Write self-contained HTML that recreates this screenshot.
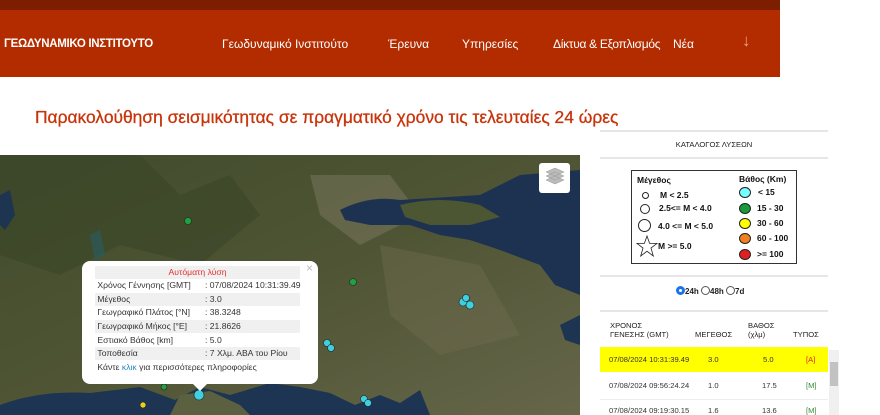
<!DOCTYPE html>
<html><head><meta charset="utf-8"><style>
*{margin:0;padding:0;box-sizing:border-box}
body{width:880px;height:415px;overflow:hidden;background:#fff;font-family:"Liberation Sans",sans-serif;position:relative}
.top{position:absolute;left:0;top:0;width:780px;height:10px;background:#7e1e00}
.nav{position:absolute;left:0;top:10px;width:780px;height:67px;background:#b22c00;color:#fff}
.nav span{position:absolute;top:27px;font-size:12px;white-space:nowrap;line-height:14px}
.logo{font-weight:bold;font-size:11.5px!important;left:4px;letter-spacing:-0.3px}
h1{position:absolute;left:35px;top:107px;font-size:17.4px;font-weight:normal;color:#c8340a;white-space:nowrap;-webkit-text-stroke:0.3px #c8340a}
.map{position:absolute;left:0;top:155px;width:580px;height:260px;overflow:hidden}
.pop{position:absolute;left:82px;top:261px;width:236px;height:123px;background:#fff;border-radius:8px;font-size:8.6px;color:#333}
.pop .r{position:absolute;left:13px;width:205px;height:13px;line-height:13px;white-space:nowrap}
.pop .r b{font-weight:normal;position:absolute;left:110px}
.g{background:#f0f0f0}
.hr{position:absolute;left:600px;width:228px;height:2px;background:#e6e6e6}
.leg{position:absolute;left:631px;top:170px;width:166px;height:94px;border:1px solid #333;font-size:8.5px;font-weight:bold;color:#111}
.leg div{position:absolute;white-space:nowrap}
.c{border:1px solid #222;border-radius:50%;position:absolute}
.t{position:absolute;font-size:7.6px;color:#333;white-space:nowrap}
</style></head><body>
<div class="top"></div>
<div class="nav">
<span class="logo">ΓΕΩΔΥΝΑΜΙΚΟ ΙΝΣΤΙΤΟΥΤΟ</span>
<span style="left:222px">Γεωδυναμικό Ινστιτούτο</span>
<span style="left:388px">Έρευνα</span>
<span style="left:462px">Υπηρεσίες</span>
<span style="left:553px;letter-spacing:-0.3px">Δίκτυα &amp; Εξοπλισμός</span>
<span style="left:673px">Νέα</span>
<span style="left:742px;font-size:17px;top:24px;color:#f0a080">↓</span>
</div>
<h1>Παρακολούθηση σεισμικότητας σε πραγματικό χρόνο τις τελευταίες 24 ώρες</h1>
<div class="map">
<svg width="580" height="260">
<defs><linearGradient id="l" x1="0" y1="0" x2="1" y2="1"><stop offset="0" stop-color="#404b2c"/><stop offset="0.5" stop-color="#4f5534"/><stop offset="1" stop-color="#66664a"/></linearGradient></defs>
<rect width="580" height="260" fill="url(#l)"/>
<path d="M0 0L140 0 180 40 230 20 260 60 200 110 120 90 60 120 0 100Z" fill="#3a4628" opacity=".6"/>
<path d="M310 20L390 20 420 60 360 90 320 60Z" fill="#7b7860" opacity=".5"/>
<path d="M380 90L480 110 520 180 440 200 390 160Z" fill="#6f6a50" opacity=".45"/>
<path d="M340 55Q370 40 400 45L480 40 520 20 580 15 580 140 555 130 540 110 500 95 470 85 440 80 410 70 370 70 345 65Z" fill="#1d3250"/>
<path d="M400 50Q440 40 480 50L500 62 470 70 430 70 405 62Z" fill="#4c5632"/>
<path d="M0 250Q40 235 90 238L140 232 175 245 200 232 230 240 270 228 300 232 330 238 355 250 380 240 400 248 420 235 430 260 0 260Z" fill="#1d3452"/>
<path d="M170 260L180 240 210 236 240 250 250 260Z" fill="#5a6040"/>
<path d="M0 40L10 35 15 60 5 75 0 70Z" fill="#1e3552"/>
<path d="M90 80L100 75 105 100 95 105Z" fill="#2b5a60" opacity=".7"/>
<path d="M560 170L580 160 580 190 565 185Z" fill="#1e3552"/>
<g stroke="#222" stroke-width=".6">
<circle cx="188" cy="66" r="3.5" fill="#22a040"/>
<circle cx="353" cy="127" r="3.5" fill="#22a040"/>
<circle cx="164" cy="232" r="3" fill="#22a040"/>
<circle cx="143" cy="250" r="3" fill="#e6d020"/>
<g fill="#3fd0e0"><circle cx="463" cy="147" r="4"/><circle cx="470" cy="150" r="4"/><circle cx="466" cy="143" r="3.5"/><circle cx="327" cy="188" r="3.5"/><circle cx="331" cy="193" r="3.5"/><circle cx="364" cy="244" r="3.5"/><circle cx="368" cy="248" r="3.5"/><circle cx="199" cy="240" r="5"/></g>
</g>
<rect x="539" y="8" width="31" height="30" rx="3" fill="#fff"/>
<path d="M546 25l9 4 9-4-9-4z M546 21l9 4 9-4-9-4z M546 17l9 4 9-4-9-4z" fill="#bbb" stroke="#999" stroke-width=".5"/>
</svg>
</div>
<div class="pop">
<div style="position:absolute;right:5px;top:0;color:#bbb;font-size:12px">×</div>
<div class="r g" style="top:5px;text-align:center;color:#e03030">Αυτόματη λύση</div>
<div class="r" style="top:18px">&nbsp;Χρόνος Γέννησης [GMT]<b>: 07/08/2024 10:31:39.49</b></div>
<div class="r g" style="top:32px">&nbsp;Μέγεθος<b>: 3.0</b></div>
<div class="r" style="top:45px">&nbsp;Γεωγραφικό Πλάτος [°N]<b>: 38.3248</b></div>
<div class="r g" style="top:59px">&nbsp;Γεωγραφικό Μήκος [°E]<b>: 21.8626</b></div>
<div class="r" style="top:73px">&nbsp;Εστιακό Βάθος [km]<b>: 5.0</b></div>
<div class="r g" style="top:86px">&nbsp;Τοποθεσία<b>: 7 Χλμ. ΑΒΑ του Ρίου</b></div>
<div class="r" style="top:100px">&nbsp;Κάντε <span style="color:#2a8ac0">κλικ</span> για περισσότερες πληροφορίες</div>
<div style="position:absolute;left:111px;bottom:-7px;width:0;height:0;border-left:7px solid transparent;border-right:7px solid transparent;border-top:7px solid #fff"></div>
</div>
<div class="hr" style="top:130px"></div>
<div style="position:absolute;left:600px;top:140px;width:228px;text-align:center;font-size:7.6px;color:#222">ΚΑΤΑΛΟΓΟΣ ΛΥΣΕΩΝ</div>
<div class="hr" style="top:157px"></div>
<div class="leg">
<div style="left:5px;top:4px">Μέγεθος</div>
<div class="c" style="left:10px;top:21px;width:7px;height:7px"></div><div style="left:28px;top:19px">M &lt; 2.5</div>
<div class="c" style="left:8px;top:33px;width:10px;height:10px"></div><div style="left:27px;top:32px">2.5&lt;= M &lt; 4.0</div>
<div class="c" style="left:6px;top:48px;width:13px;height:13px"></div><div style="left:26px;top:50px">4.0 &lt;= M &lt; 5.0</div>
<svg style="position:absolute;left:4px;top:64px" width="22" height="22"><polygon points="11,1 13.6,8.4 21,8.4 15,13 17.3,21 11,16.3 4.7,21 7,13 1,8.4 8.4,8.4" fill="none" stroke="#222" stroke-width=".8"/></svg><div style="left:26px;top:70px">M &gt;= 5.0</div>
<div style="left:107px;top:3px">Βάθος (Km)</div>
<div class="c" style="left:107px;top:16px;width:12px;height:11px;background:#7ff"></div><div style="left:126px;top:16px">&lt; 15</div>
<div class="c" style="left:107px;top:32px;width:12px;height:11px;background:#1a9a3a"></div><div style="left:125px;top:32px">15 - 30</div>
<div class="c" style="left:107px;top:47px;width:12px;height:11px;background:#ff0"></div><div style="left:125px;top:47px">30 - 60</div>
<div class="c" style="left:107px;top:62px;width:12px;height:11px;background:#f08020"></div><div style="left:125px;top:62px">60 - 100</div>
<div class="c" style="left:107px;top:78px;width:12px;height:11px;background:#e02020"></div><div style="left:125px;top:78px">&gt;= 100</div>
</div>
<div class="hr" style="top:275px"></div>
<div style="position:absolute;left:676px;top:286px;font-size:8px;font-weight:bold;color:#222;white-space:nowrap">
<span style="display:inline-block;width:9px;height:9px;border-radius:50%;border:3px solid #1a73e8;vertical-align:-1px"></span>24h <span style="display:inline-block;width:9px;height:9px;border-radius:50%;border:1px solid #555;vertical-align:-1px"></span>48h <span style="display:inline-block;width:9px;height:9px;border-radius:50%;border:1px solid #555;vertical-align:-1px"></span>7d</div>
<div class="hr" style="top:310px"></div>
<div style="position:absolute;top:321px;font-size:7.6px;color:#222;line-height:9px">
<div style="position:absolute;left:610px;width:90px">ΧΡΟΝΟΣ<br>ΓΕΝΕΣΗΣ (GMT)</div>
<div style="position:absolute;left:695px;top:9px;width:60px">ΜΕΓΕΘΟΣ</div>
<div style="position:absolute;left:748px;width:60px">ΒΑΘΟΣ<br>(χλμ)</div>
<div style="position:absolute;left:793px;top:9px;width:60px">ΤΥΠΟΣ</div>
</div>
<div style="position:absolute;left:600px;top:347px;width:228px;height:25px;background:#ff0"></div>
<div style="position:absolute;left:600px;top:399px;width:228px;height:1px;background:#eee"></div>
<div style="position:absolute;left:829px;top:350px;width:10px;height:65px;background:#f0f0f0"></div>
<div style="position:absolute;left:830px;top:362px;width:8px;height:24px;background:#c2c2c2"></div>
<div class="t" style="left:609px;top:355px">07/08/2024 10:31:39.49</div><div class="t" style="left:708px;top:355px">3.0</div><div class="t" style="left:763px;top:355px">5.0</div><div class="t" style="left:806px;top:355px;color:#e02020">[A]</div>
<div class="t" style="left:609px;top:381px">07/08/2024 09:56:24.24</div><div class="t" style="left:708px;top:381px">1.0</div><div class="t" style="left:762px;top:381px">17.5</div><div class="t" style="left:806px;top:381px;color:#3a8a3a">[M]</div>
<div class="t" style="left:609px;top:406px">07/08/2024 09:19:30.15</div><div class="t" style="left:708px;top:406px">1.6</div><div class="t" style="left:762px;top:406px">13.6</div><div class="t" style="left:806px;top:406px;color:#3a8a3a">[M]</div>
</body></html>
